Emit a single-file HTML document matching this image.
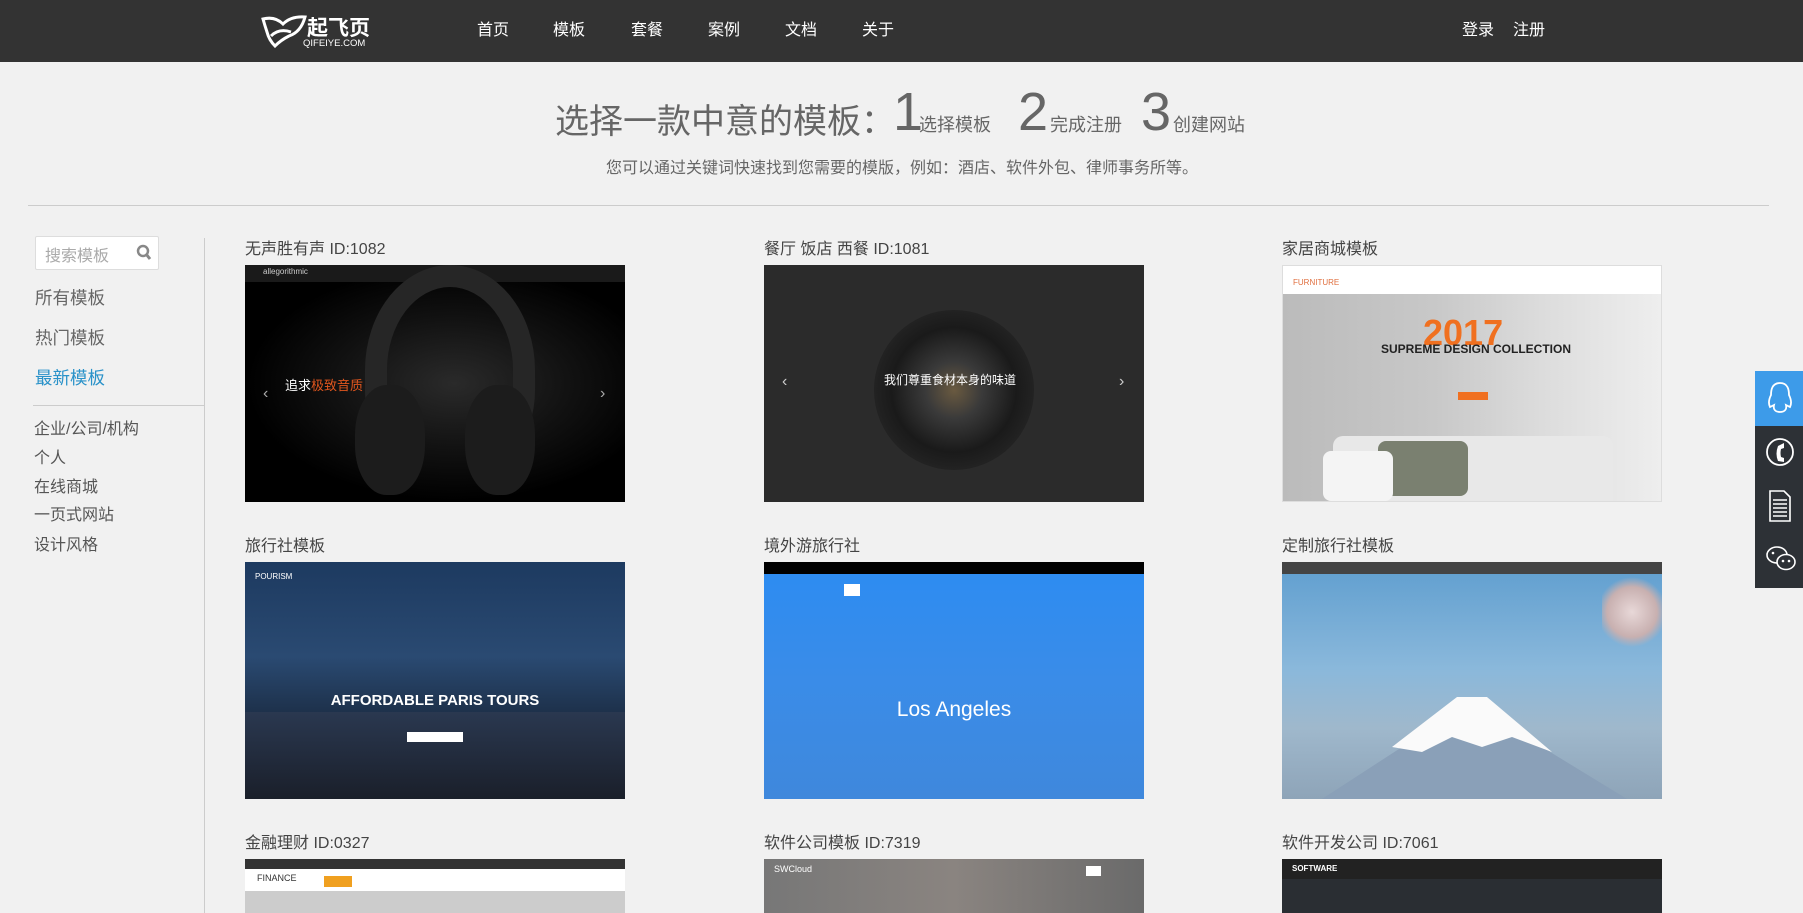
<!DOCTYPE html>
<html><head><meta charset="utf-8">
<style>
*{margin:0;padding:0;box-sizing:border-box}
body{width:1803px;height:913px;overflow:hidden;background:#f1f1f1;font-family:"Liberation Sans","Noto Sans CJK SC",sans-serif;color:#555;position:relative}
.hdr{position:absolute;left:0;top:0;width:1803px;height:62px;background:#333}
.a{position:absolute;white-space:nowrap}
.nav{color:#fff;font-size:16px;top:16px}
.card{position:absolute;width:380px;height:237px;overflow:hidden}
.ct{position:absolute;font-size:16px;color:#444;white-space:nowrap}
.side{font-size:17.5px;color:#666;left:35px}
.cat{font-size:16px;color:#555;left:34px}
.rb{position:absolute;left:1755px;width:48px;background:#2d3136}
</style></head><body>
<div class="hdr"></div>
<svg class="a" style="left:261px;top:14px" width="46" height="34" viewBox="0 0 46 34"><path d="M2 5 Q14 2 22 10 Q30 2 44 3 Q40 18 28 22 Q20 26 14 32 Q8 26 6 18 Q4 12 2 5 Z M10 22 Q18 14 30 18" fill="none" stroke="#fff" stroke-width="3"/></svg>
<div class="a" style="left:307px;top:12px;color:#fff;font-size:21px;font-weight:bold">起飞页</div>
<div class="a" style="left:303px;top:38px;color:#fff;font-size:9.5px">QIFEIYE.COM</div>
<div class="a nav" style="left:477px">首页</div>
<div class="a nav" style="left:553px">模板</div>
<div class="a nav" style="left:631px">套餐</div>
<div class="a nav" style="left:708px">案例</div>
<div class="a nav" style="left:785px">文档</div>
<div class="a nav" style="left:862px">关于</div>
<div class="a nav" style="left:1462px">登录</div>
<div class="a nav" style="left:1513px">注册</div>

<div class="a" style="left:555px;top:94px;font-size:34px;color:#666">选择一款中意的模板：</div>
<div class="a" style="left:893px;top:81px;font-size:54px;color:#666">1</div>
<div class="a" style="left:919px;top:111px;font-size:18px;color:#666">选择模板</div>
<div class="a" style="left:1018px;top:81px;font-size:54px;color:#666">2</div>
<div class="a" style="left:1050px;top:111px;font-size:18px;color:#666">完成注册</div>
<div class="a" style="left:1141px;top:81px;font-size:54px;color:#666">3</div>
<div class="a" style="left:1173px;top:111px;font-size:18px;color:#666">创建网站</div>
<div class="a" style="left:606px;top:154px;font-size:16px;color:#666">您可以通过关键词快速找到您需要的模版，例如：酒店、软件外包、律师事务所等。</div>
<div class="a" style="left:28px;top:205px;width:1741px;height:1px;background:#ccc"></div>

<div class="a" style="left:35px;top:236px;width:124px;height:34px;background:#fff;border:1px solid #ddd;border-radius:2px"></div>
<div class="a" style="left:45px;top:242px;font-size:16px;color:#aaa">搜索模板</div>
<svg class="a" style="left:136px;top:244px" width="16" height="17" viewBox="0 0 16 17"><circle cx="7" cy="7" r="5" fill="none" stroke="#888" stroke-width="2.5"/><path d="M10 10 L14 15" stroke="#888" stroke-width="3"/></svg>
<div class="a" style="left:204px;top:238px;width:1px;height:675px;background:#ccc"></div>
<div class="a side" style="top:285px">所有模板</div>
<div class="a side" style="top:325px">热门模板</div>
<div class="a side" style="top:365px;color:#2a92c9">最新模板</div>
<div class="a" style="left:33px;top:405px;width:171px;height:1px;background:#ccc"></div>
<div class="a cat" style="top:415px">企业/公司/机构</div>
<div class="a cat" style="top:444px">个人</div>
<div class="a cat" style="top:473px">在线商城</div>
<div class="a cat" style="top:501px">一页式网站</div>
<div class="a cat" style="top:531px">设计风格</div>

<div class="ct" style="left:245px;top:235px">无声胜有声 ID:1082</div>
<div class="card" style="left:245px;top:265px;background:radial-gradient(ellipse at 55% 50%,#2a2a2a 0,#111 40%,#000 70%)">
 <div style="position:absolute;left:0;top:0;width:380px;height:17px;background:#1a1a1a"></div>
 <div style="position:absolute;left:18px;top:2px;color:#ccc;font-size:8px">allegorithmic</div>
 <div style="position:absolute;left:120px;top:0px;width:170px;height:210px;border:22px solid #262626;border-bottom-color:transparent;border-radius:50% 50% 40% 40%"></div>
 <div style="position:absolute;left:110px;top:120px;width:70px;height:110px;border-radius:45%;background:#1c1c1c"></div>
 <div style="position:absolute;left:220px;top:120px;width:70px;height:110px;border-radius:45%;background:#1c1c1c"></div>
 <div style="position:absolute;left:40px;top:110px;color:#fff;font-size:13px">追求<span style="color:#e0561e">极致音质</span></div>
 <div style="position:absolute;left:18px;top:120px;color:#aaa;font-size:16px">‹</div>
 <div style="position:absolute;left:355px;top:120px;color:#aaa;font-size:16px">›</div>
</div>

<div class="ct" style="left:764px;top:235px">餐厅 饭店 西餐 ID:1081</div>
<div class="card" style="left:764px;top:265px;background:#2b2b2b">
 <div style="position:absolute;left:110px;top:45px;width:160px;height:160px;border-radius:50%;background:radial-gradient(circle,#6a5a40 0,#3a3a3a 25%,#1a1a1a 55%,#222 70%)"></div>
 <div style="position:absolute;left:120px;top:106px;color:#fff;font-size:12px">我们尊重食材本身的味道</div>
 <div style="position:absolute;left:18px;top:108px;color:#ccc;font-size:16px">‹</div>
 <div style="position:absolute;left:355px;top:108px;color:#ccc;font-size:16px">›</div>
</div>

<div class="ct" style="left:1282px;top:235px">家居商城模板</div>
<div class="card" style="left:1282px;top:265px;background:linear-gradient(90deg,#bbb 0,#c8c8c8 40%,#ddd 70%,#eee 100%);border:1px solid #ddd">
 <div style="position:absolute;left:0;top:0;width:380px;height:28px;background:#fff"></div>
 <div style="position:absolute;left:10px;top:12px;color:#e07040;font-size:8px">FURNITURE</div>
 <div style="position:absolute;left:140px;top:46px;color:#f07020;font-size:36px;font-weight:bold">2017</div>
 <div style="position:absolute;left:98px;top:76px;color:#222;font-size:12px;font-weight:bold">SUPREME DESIGN COLLECTION</div>
 <div style="position:absolute;left:175px;top:126px;width:30px;height:8px;background:#f07020"></div>
 <div style="position:absolute;left:50px;top:170px;width:280px;height:67px;background:#e8e8e8;border-radius:10px 10px 0 0"></div>
 <div style="position:absolute;left:95px;top:175px;width:90px;height:55px;background:#7a8070;border-radius:8px"></div>
 <div style="position:absolute;left:40px;top:185px;width:70px;height:50px;background:#f4f4f4;border-radius:8px"></div>
</div>

<div class="ct" style="left:245px;top:532px">旅行社模板</div>
<div class="card" style="left:245px;top:562px;background:linear-gradient(180deg,#1d3a60 0,#2a4a72 40%,#1a2a40 70%,#202830 100%)">
 <div style="position:absolute;left:0;top:150px;width:380px;height:87px;background:linear-gradient(180deg,#2a3850,#1a1f2a)"></div>
 <div style="position:absolute;left:10px;top:10px;color:#fff;font-size:8px">POURISM</div>
 <div style="position:absolute;left:0;top:130px;width:380px;text-align:center;color:#fff;font-size:15px;font-weight:bold">AFFORDABLE PARIS TOURS</div>
 <div style="position:absolute;left:162px;top:170px;width:56px;height:10px;background:#fff"></div>
</div>

<div class="ct" style="left:764px;top:532px">境外游旅行社</div>
<div class="card" style="left:764px;top:562px;background:linear-gradient(180deg,#2c8cf2 0,#3a8ce8 50%,#3f88dc 100%)">
 <div style="position:absolute;left:0;top:0;width:380px;height:12px;background:#000"></div>
 <div style="position:absolute;left:80px;top:22px;width:16px;height:12px;background:#fff"></div>
 <div style="position:absolute;left:0;top:136px;width:380px;text-align:center;color:#fff;font-size:21px">Los Angeles</div>
</div>

<div class="ct" style="left:1282px;top:532px">定制旅行社模板</div>
<div class="card" style="left:1282px;top:562px;background:linear-gradient(180deg,#5f9ecf 0,#8ab8db 45%,#9fb8cc 70%,#8ea4b8 100%)">
 <div style="position:absolute;left:0;top:0;width:380px;height:12px;background:#444"></div>
 <svg style="position:absolute;left:0;top:95px" width="380" height="142"><polygon points="40,142 120,90 175,40 205,40 260,90 345,142" fill="#8aa0b8"/><polygon points="110,90 175,40 205,40 270,95 230,80 200,90 170,80 140,95" fill="#fafafa"/></svg>
 <div style="position:absolute;left:320px;top:10px;width:60px;height:80px;background:radial-gradient(circle,#e8d8d8 0,#c8b0b0 50%,transparent 70%)"></div>
</div>

<div class="ct" style="left:245px;top:829px">金融理财 ID:0327</div>
<div class="card" style="left:245px;top:859px;height:54px;background:#ccc">
 <div style="position:absolute;left:0;top:0;width:380px;height:10px;background:#333"></div>
 <div style="position:absolute;left:0;top:10px;width:380px;height:22px;background:#fff"></div>
 <div style="position:absolute;left:12px;top:14px;color:#333;font-size:9px">FINANCE</div>
 <div style="position:absolute;left:79px;top:17px;width:28px;height:11px;background:#f0a020"></div>
</div>

<div class="ct" style="left:764px;top:829px">软件公司模板 ID:7319</div>
<div class="card" style="left:764px;top:859px;height:54px;background:linear-gradient(90deg,#777,#8a8480 50%,#6a6a6a)">
 <div style="position:absolute;left:10px;top:5px;color:#fff;font-size:9px">SWCloud</div>
 <div style="position:absolute;left:322px;top:7px;width:15px;height:10px;background:#fff"></div>
</div>

<div class="ct" style="left:1282px;top:829px">软件开发公司 ID:7061</div>
<div class="card" style="left:1282px;top:859px;height:54px;background:#2a2e33">
 <div style="position:absolute;left:0;top:0;width:380px;height:20px;background:#222"></div>
 <div style="position:absolute;left:10px;top:5px;color:#fff;font-size:8px;font-weight:bold">SOFTWARE</div>
</div>

<div class="rb" style="top:371px;height:55px;background:#3d9be9"></div>
<div class="rb" style="top:426px;height:162px"></div>
<svg class="a" style="left:1765px;top:380px" width="30" height="36" viewBox="0 0 30 36"><path d="M15 3 C7 3 6 10 6 15 C4 19 3 23 5 27 L9 25 C8 29 10 32 15 32 C20 32 22 29 21 25 L25 27 C27 23 26 19 24 15 C24 10 23 3 15 3 Z" fill="none" stroke="#fff" stroke-width="1.8"/></svg>
<svg class="a" style="left:1765px;top:436px" width="30" height="32" viewBox="0 0 30 32"><circle cx="15" cy="16" r="13" fill="none" stroke="#fff" stroke-width="1.8"/><path d="M19 7 L13 10 Q10 18 13 25 L19 26 L19 22 L16 21 Q15 17 16 13 L19 12 Z" fill="#fff"/></svg>
<svg class="a" style="left:1769px;top:490px" width="22" height="32" viewBox="0 0 22 32"><path d="M1 1 H15 L21 7 V31 H1 Z" fill="none" stroke="#fff" stroke-width="1.6"/><path d="M4 10 H18 M4 14 H18 M4 18 H18 M4 22 H18 M4 26 H18" stroke="#fff" stroke-width="1.6"/></svg>
<svg class="a" style="left:1765px;top:544px" width="32" height="30" viewBox="0 0 32 30"><ellipse cx="12" cy="11" rx="10" ry="8" fill="none" stroke="#fff" stroke-width="1.6"/><ellipse cx="21" cy="18" rx="9" ry="7.5" fill="#2d3136" stroke="#fff" stroke-width="1.6"/><circle cx="18" cy="17" r="1.3" fill="#fff"/><circle cx="24" cy="17" r="1.3" fill="#fff"/><circle cx="8" cy="9" r="1.3" fill="#fff"/></svg>
</body></html>
